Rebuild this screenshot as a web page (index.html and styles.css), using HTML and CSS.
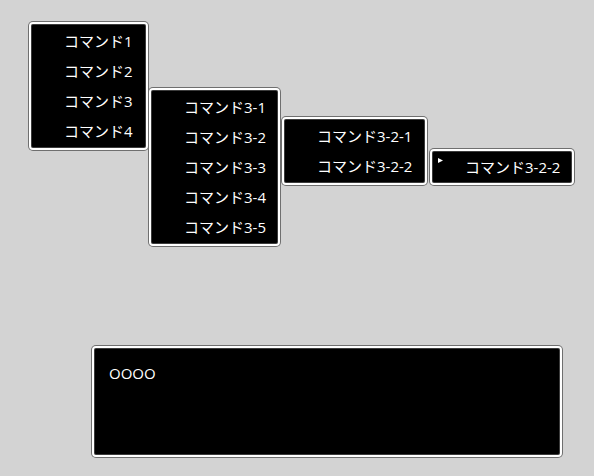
FILE: index.html
```html
<!DOCTYPE html>
<html lang="ja">
<head>
<meta charset="utf-8">
<title>Command Windows</title>
<link rel="stylesheet" href="styles.css">
</head>
<body>
<div class="screen">
  <div class="window menu menu-1">
    <div class="item">コマンド1</div>
    <div class="item">コマンド2</div>
    <div class="item">コマンド3</div>
    <div class="item">コマンド4</div>
  </div>
  <div class="window menu menu-2">
    <div class="item">コマンド3-1</div>
    <div class="item">コマンド3-2</div>
    <div class="item">コマンド3-3</div>
    <div class="item">コマンド3-4</div>
    <div class="item">コマンド3-5</div>
  </div>
  <div class="window menu menu-3">
    <div class="item">コマンド3-2-1</div>
    <div class="item">コマンド3-2-2</div>
  </div>
  <div class="window menu menu-4">
    <svg class="cursor" width="6" height="6" viewBox="0 0 6 6"><polygon points="0,0 5,2.5 0,5" fill="#fff"/></svg>
    <div class="item">コマンド3-2-2</div>
  </div>
  <div class="window message">
    <div class="message-text">OOOO</div>
  </div>
</div>
</body>
</html>
```
FILE: styles.css
```css
html, body {
  margin: 0;
  padding: 0;
  background: #d3d3d3;
}
.screen {
  position: relative;
  width: 594px;
  height: 476px;
  overflow: hidden;
  font-family: "Open Sans", "Noto Sans CJK JP", sans-serif;
  font-size: 15px;
  color: #ffffff;
}
.window {
  position: absolute;
  box-sizing: border-box;
  background: #000;
  border: 2px solid #fff;
  border-radius: 4px;
  box-shadow: inset 0 0 0 1px #3c3c3c, 0 0 0 1px #6f6f6f;
}
.menu {
  display: flex;
  flex-direction: column;
  padding: 2px 0 2px 33px;
}
.item {
  height: 30px;
  line-height: 30px;
  white-space: nowrap;
}
.menu-1 { left: 29px; top: 22px; width: 119px; }
.menu-2 { left: 149px; top: 88px; width: 131px; }
.menu-3 { left: 282px; top: 117px; width: 145px; }
.menu-4 { left: 430px; top: 149px; width: 144px; padding-top: 1px; padding-bottom: 1px; }
.cursor {
  position: absolute;
  left: 6px;
  top: 7px;
}
.message {
  left: 92px;
  top: 346px;
  width: 470px;
  height: 111px;
  padding: 15px 15px;
}
.message-text {
  line-height: 20px;
}
```
